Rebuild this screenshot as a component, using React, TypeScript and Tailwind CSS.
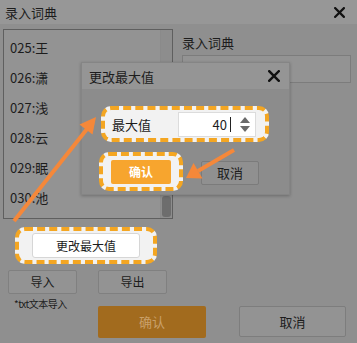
import React from "react";

const font = { fontFamily: '"Noto Sans CJK SC", "Noto Sans", sans-serif' };

const words = ["025:王", "026:潇", "027:浅", "028:云", "029:眠", "030:池"];

function CloseIcon({ size = 11 }: { size?: number }) {
  return (
    <svg width={size} height={size} viewBox="0 0 10 10">
      <path d="M1 1 L9 9 M9 1 L1 9" stroke="#111" strokeWidth="2" strokeLinecap="square" />
    </svg>
  );
}

export default function App() {
  return (
    <div className="relative h-[343px] w-[357px] overflow-hidden bg-[#8f8f8f] text-[#1c1c1c]" style={font}>
      {/* window title */}
      <div className="flex h-[24px] items-center justify-between bg-[#979797] pl-[5px] pr-[12px]">
        <span className="text-[13px] leading-none">录入词典</span>
        <CloseIcon />
      </div>

      <div className="flex">
        {/* left column */}
        <div className="flex w-[172px] flex-col pl-[3px] pt-[5px]">
          <div className="flex h-[190px] w-[170px] border border-[#5f5f5f] bg-[#939393]">
            <div className="flex flex-1 flex-col pl-[6px] pt-[2px]">
              {words.map((w) => (
                <div key={w} className="flex h-[30px] items-center text-[13px] leading-none">
                  {w}
                </div>
              ))}
            </div>
            <div className="flex w-[12px] flex-col justify-end border-l border-[#8a8a8a] bg-[#8d8d8d] pb-[1px]">
              <div className="mx-auto h-[21px] w-[9px] rounded-[3px] bg-[#6d6d6d]" />
            </div>
          </div>

          <div className="ml-[12px] mt-[8px] flex h-[37px] w-[142px] items-center justify-center rounded-[10px] border-4 border-dashed border-[#f4a622] bg-[#f2f2f2]">
            <div className="flex h-[25px] w-[108px] items-center justify-center rounded-[3px] border border-[#d6d6d6] bg-white text-[12px]">
              更改最大值
            </div>
          </div>

          <div className="mt-[6px] flex gap-[21px] pl-[5px]">
            <div className="flex h-[24px] w-[69px] items-center justify-center rounded-[2px] border border-[#808080] bg-[#939393] text-[12px]">
              导入
            </div>
            <div className="flex h-[24px] w-[69px] items-center justify-center rounded-[2px] border border-[#808080] bg-[#939393] text-[12px]">
              导出
            </div>
          </div>

          <div className="mt-[3px] pl-[11px] text-[10px] leading-[14px] tracking-[-0.5px]">*txt文本导入</div>
        </div>

        {/* right column */}
        <div className="flex flex-1 flex-col pl-[10px] pr-[6px] pt-[11px]">
          <div className="text-[13px] leading-[16px]">录入词典</div>
          <div className="mt-[4px] h-[28px] border border-[#7c7c7c] bg-[#939393]" />
        </div>
      </div>

      {/* footer buttons */}
      <div className="-mt-[5px] flex pl-[98px]">
        <div className="flex h-[32px] w-[108px] items-center justify-center rounded-[2px] bg-[#a26b1e] text-[13px] text-[#c9a06a]">
          确认
        </div>
        <div className="ml-[33px] flex h-[31px] w-[107px] items-center justify-center rounded-[2px] border border-[#7d7d7d] bg-[#939393] text-[13px]">
          取消
        </div>
      </div>

      {/* modal */}
      <div className="absolute left-[81px] top-[62px] flex h-[133px] w-[209px] flex-col border border-[#858585] bg-[#8c8c8c] shadow-[0_1px_3px_rgba(0,0,0,0.25)]">
        <div className="flex h-[26px] items-center justify-between bg-[#959595] pl-[7px] pr-[9px]">
          <span className="text-[13px] leading-none">更改最大值</span>
          <CloseIcon size={12} />
        </div>

        <div className="ml-[19px] mt-[17px] flex h-[36px] w-[168px] items-center rounded-[10px] border-4 border-dashed border-[#f4a622] bg-[#f2f2f2] pl-[7px]">
          <span className="text-[13px] leading-none">最大值</span>
          <div className="ml-[27px] flex h-[25px] w-[78px] items-center border border-[#dcdcdc] bg-white">
            <span className="flex-1 pr-[3px] text-right text-[13px] leading-none">40</span>
            <span className="h-[15px] w-px bg-[#222]" />
            <div className="ml-[4px] flex h-full w-[20px] flex-col items-center justify-center gap-[3px]">
              <svg width="10" height="6" viewBox="0 0 10 6">
                <path d="M0 6 L5 0 L10 6 Z" fill="#6a6a6a" />
              </svg>
              <svg width="10" height="6" viewBox="0 0 10 6">
                <path d="M0 0 L10 0 L5 6 Z" fill="#6a6a6a" />
              </svg>
            </div>
          </div>
        </div>

        <div className="ml-[17px] mt-[10px] flex items-start">
          <div className="flex h-[39px] w-[84px] items-center justify-center rounded-[10px] border-4 border-dashed border-[#f4a622] bg-[#f2f2f2]">
            <div className="flex h-[24px] w-[60px] items-center justify-center rounded-[2px] bg-[#f7a52e] text-[12px] font-bold text-white">
              确认
            </div>
          </div>
          <div className="ml-[18px] mt-[9px] flex h-[24px] w-[58px] items-center justify-center rounded-[2px] border border-[#7b7b7b] bg-[#909090] text-[13px]">
            取消
          </div>
        </div>
      </div>

      {/* annotation arrows */}
      <svg className="pointer-events-none absolute left-0 top-0" width="357" height="343">
        <line x1="14" y1="221" x2="87" y2="129" stroke="#f5883a" strokeWidth="4" />
        <path d="M96 117 L79.5 124.5 L92.5 134.5 Z" fill="#f5883a" />
        <line x1="234" y1="150" x2="198" y2="171" stroke="#f5883a" strokeWidth="4" />
        <path d="M186 178 L193.5 163 L202.5 178.5 Z" fill="#f5883a" />
      </svg>
    </div>
  );
}
